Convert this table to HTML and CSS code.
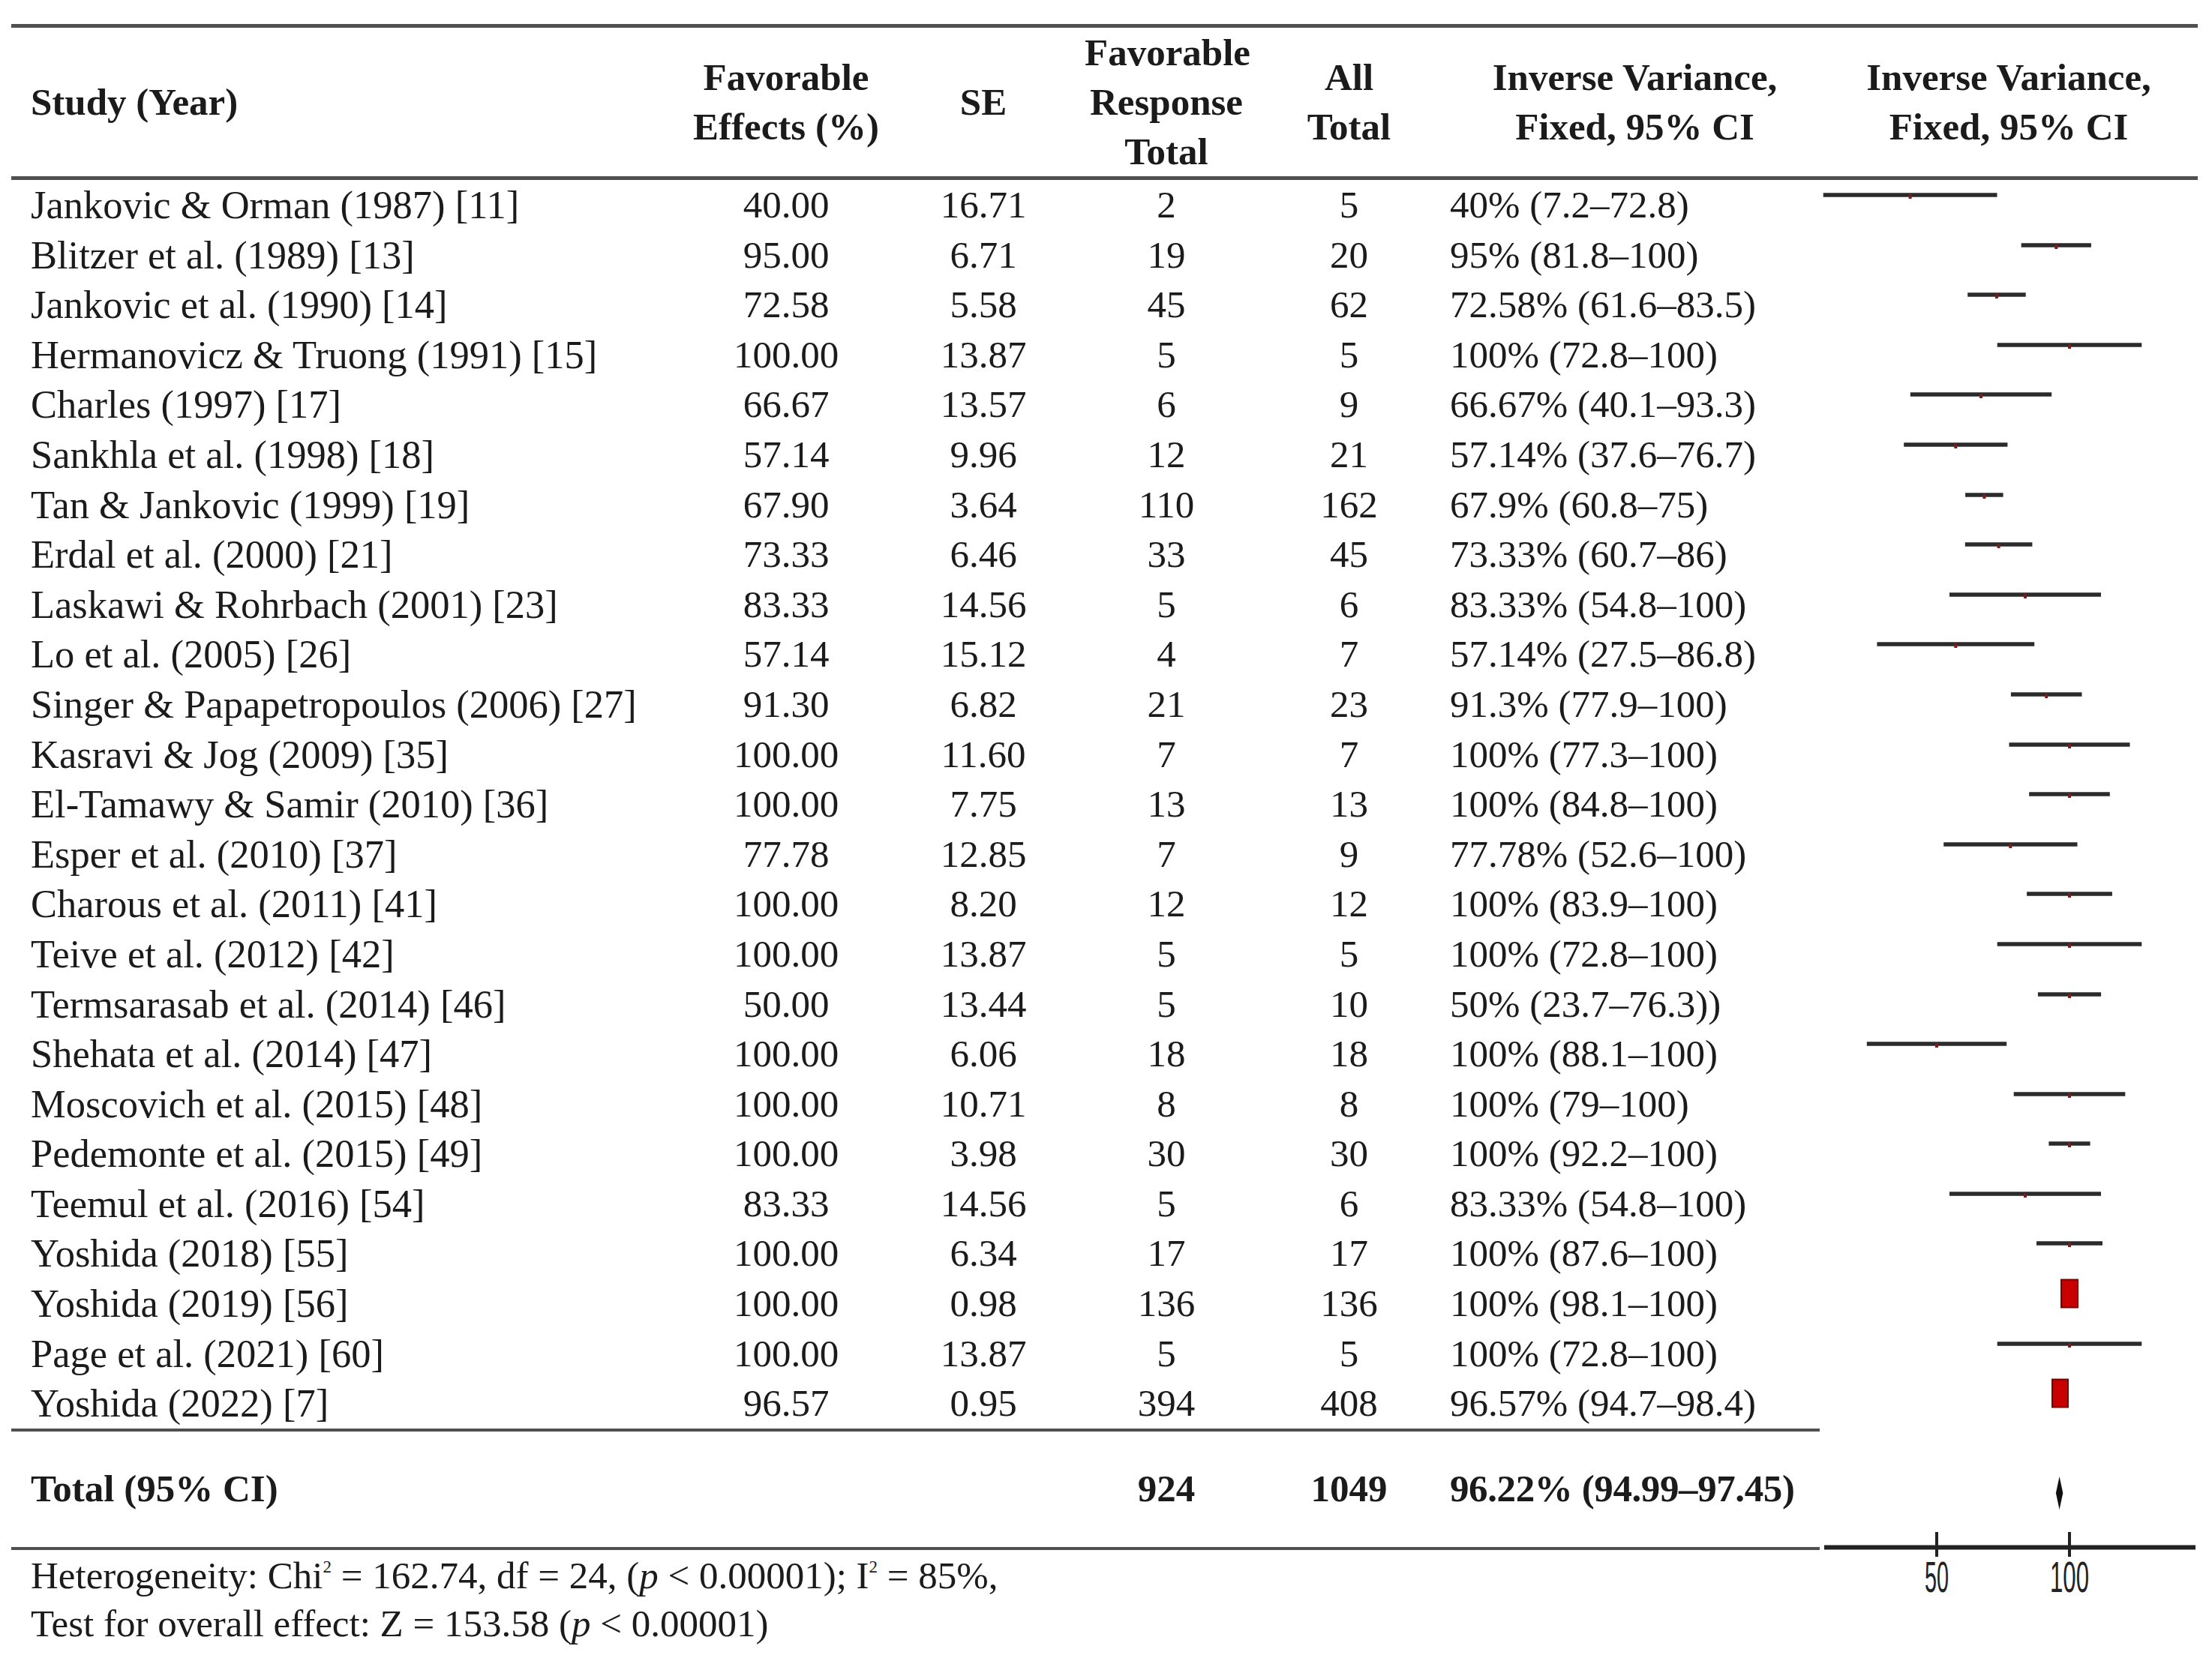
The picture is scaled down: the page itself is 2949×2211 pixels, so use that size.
FILE: index.html
```html
<!DOCTYPE html>
<html lang="en">
<head>
<meta charset="utf-8">
<title>Forest plot table</title>
<link rel="stylesheet" href="styles.css">
</head>
<body>
<div class="page">
  <div class="row head">
    <div class="c study">Study (Year)</div>
    <div class="c">Favorable<br>Effects (%)</div>
    <div class="c">SE</div>
    <div class="c">Favorable<br>Response<br>Total</div>
    <div class="c">All<br>Total</div>
    <div class="c">Inverse Variance,<br>Fixed, 95% CI</div>
    <div class="c">Inverse Variance,<br>Fixed, 95% CI</div>
  </div>

  <div class="row"><div class="c study">Jankovic &amp; Orman (1987) [11]</div><div class="c">40.00</div><div class="c">16.71</div><div class="c">2</div><div class="c">5</div><div class="c cit">40% (7.2–72.8)</div><div class="c plot"><svg class="fp" viewBox="0 0 504 66.6"><line class="ci" x1="4.7" y1="20" x2="236.5" y2="20"/><rect class="pt" x="118.6" y="19" width="4" height="6"/></svg></div></div>
  <div class="row"><div class="c study">Blitzer et al. (1989) [13]</div><div class="c">95.00</div><div class="c">6.71</div><div class="c">19</div><div class="c">20</div><div class="c cit">95% (81.8–100)</div><div class="c plot"><svg class="fp" viewBox="0 0 504 66.6"><line class="ci" x1="268.7" y1="20" x2="361.9" y2="20"/><rect class="pt" x="313.3" y="19" width="4" height="6"/></svg></div></div>
  <div class="row"><div class="c study">Jankovic et al. (1990) [14]</div><div class="c">72.58</div><div class="c">5.58</div><div class="c">45</div><div class="c">62</div><div class="c cit">72.58% (61.6–83.5)</div><div class="c plot"><svg class="fp" viewBox="0 0 504 66.6"><line class="ci" x1="197.2" y1="20" x2="274.7" y2="20"/><rect class="pt" x="233.9" y="19" width="4" height="6"/></svg></div></div>
  <div class="row"><div class="c study">Hermanovicz &amp; Truong (1991) [15]</div><div class="c">100.00</div><div class="c">13.87</div><div class="c">5</div><div class="c">5</div><div class="c cit">100% (72.8–100)</div><div class="c plot"><svg class="fp" viewBox="0 0 504 66.6"><line class="ci" x1="236.7" y1="20" x2="429.3" y2="20"/><rect class="pt" x="331" y="19" width="4" height="6"/></svg></div></div>
  <div class="row"><div class="c study">Charles (1997) [17]</div><div class="c">66.67</div><div class="c">13.57</div><div class="c">6</div><div class="c">9</div><div class="c cit">66.67% (40.1–93.3)</div><div class="c plot"><svg class="fp" viewBox="0 0 504 66.6"><line class="ci" x1="120.8" y1="20" x2="309.2" y2="20"/><rect class="pt" x="213" y="19" width="4" height="6"/></svg></div></div>
  <div class="row"><div class="c study">Sankhla et al. (1998) [18]</div><div class="c">57.14</div><div class="c">9.96</div><div class="c">12</div><div class="c">21</div><div class="c cit">57.14% (37.6–76.7)</div><div class="c plot"><svg class="fp" viewBox="0 0 504 66.6"><line class="ci" x1="112.2" y1="20" x2="250.4" y2="20"/><rect class="pt" x="179.3" y="19" width="4" height="6"/></svg></div></div>
  <div class="row"><div class="c study">Tan &amp; Jankovic (1999) [19]</div><div class="c">67.90</div><div class="c">3.64</div><div class="c">110</div><div class="c">162</div><div class="c cit">67.9% (60.8–75)</div><div class="c plot"><svg class="fp" viewBox="0 0 504 66.6"><line class="ci" x1="194.1" y1="20" x2="244.6" y2="20"/><rect class="pt" x="217.4" y="19" width="4" height="6"/></svg></div></div>
  <div class="row"><div class="c study">Erdal et al. (2000) [21]</div><div class="c">73.33</div><div class="c">6.46</div><div class="c">33</div><div class="c">45</div><div class="c cit">73.33% (60.7–86)</div><div class="c plot"><svg class="fp" viewBox="0 0 504 66.6"><line class="ci" x1="193.8" y1="20" x2="283.4" y2="20"/><rect class="pt" x="236.6" y="19" width="4" height="6"/></svg></div></div>
  <div class="row"><div class="c study">Laskawi &amp; Rohrbach (2001) [23]</div><div class="c">83.33</div><div class="c">14.56</div><div class="c">5</div><div class="c">6</div><div class="c cit">83.33% (54.8–100)</div><div class="c plot"><svg class="fp" viewBox="0 0 504 66.6"><line class="ci" x1="173" y1="20" x2="375" y2="20"/><rect class="pt" x="272" y="19" width="4" height="6"/></svg></div></div>
  <div class="row"><div class="c study">Lo et al. (2005) [26]</div><div class="c">57.14</div><div class="c">15.12</div><div class="c">4</div><div class="c">7</div><div class="c cit">57.14% (27.5–86.8)</div><div class="c plot"><svg class="fp" viewBox="0 0 504 66.6"><line class="ci" x1="76.4" y1="20" x2="286.2" y2="20"/><rect class="pt" x="179.3" y="19" width="4" height="6"/></svg></div></div>
  <div class="row"><div class="c study">Singer &amp; Papapetropoulos (2006) [27]</div><div class="c">91.30</div><div class="c">6.82</div><div class="c">21</div><div class="c">23</div><div class="c cit">91.3% (77.9–100)</div><div class="c plot"><svg class="fp" viewBox="0 0 504 66.6"><line class="ci" x1="254.9" y1="20" x2="349.5" y2="20"/><rect class="pt" x="300.2" y="19" width="4" height="6"/></svg></div></div>
  <div class="row"><div class="c study">Kasravi &amp; Jog (2009) [35]</div><div class="c">100.00</div><div class="c">11.60</div><div class="c">7</div><div class="c">7</div><div class="c cit">100% (77.3–100)</div><div class="c plot"><svg class="fp" viewBox="0 0 504 66.6"><line class="ci" x1="252.5" y1="20" x2="413.5" y2="20"/><rect class="pt" x="331" y="19" width="4" height="6"/></svg></div></div>
  <div class="row"><div class="c study">El-Tamawy &amp; Samir (2010) [36]</div><div class="c">100.00</div><div class="c">7.75</div><div class="c">13</div><div class="c">13</div><div class="c cit">100% (84.8–100)</div><div class="c plot"><svg class="fp" viewBox="0 0 504 66.6"><line class="ci" x1="279.2" y1="20" x2="386.8" y2="20"/><rect class="pt" x="331" y="19" width="4" height="6"/></svg></div></div>
  <div class="row"><div class="c study">Esper et al. (2010) [37]</div><div class="c">77.78</div><div class="c">12.85</div><div class="c">7</div><div class="c">9</div><div class="c cit">77.78% (52.6–100)</div><div class="c plot"><svg class="fp" viewBox="0 0 504 66.6"><line class="ci" x1="165.2" y1="20" x2="343.5" y2="20"/><rect class="pt" x="252.3" y="19" width="4" height="6"/></svg></div></div>
  <div class="row"><div class="c study">Charous et al. (2011) [41]</div><div class="c">100.00</div><div class="c">8.20</div><div class="c">12</div><div class="c">12</div><div class="c cit">100% (83.9–100)</div><div class="c plot"><svg class="fp" viewBox="0 0 504 66.6"><line class="ci" x1="276.1" y1="20" x2="389.9" y2="20"/><rect class="pt" x="331" y="19" width="4" height="6"/></svg></div></div>
  <div class="row"><div class="c study">Teive et al. (2012) [42]</div><div class="c">100.00</div><div class="c">13.87</div><div class="c">5</div><div class="c">5</div><div class="c cit">100% (72.8–100)</div><div class="c plot"><svg class="fp" viewBox="0 0 504 66.6"><line class="ci" x1="236.7" y1="20" x2="429.3" y2="20"/><rect class="pt" x="331" y="19" width="4" height="6"/></svg></div></div>
  <div class="row"><div class="c study">Termsarasab et al. (2014) [46]</div><div class="c">50.00</div><div class="c">13.44</div><div class="c">5</div><div class="c">10</div><div class="c cit">50% (23.7–76.3))</div><div class="c plot"><svg class="fp" viewBox="0 0 504 66.6"><line class="ci" x1="290.9" y1="20" x2="375.1" y2="20"/><rect class="pt" x="331" y="19" width="4" height="6"/></svg></div></div>
  <div class="row"><div class="c study">Shehata et al. (2014) [47]</div><div class="c">100.00</div><div class="c">6.06</div><div class="c">18</div><div class="c">18</div><div class="c cit">100% (88.1–100)</div><div class="c plot"><svg class="fp" viewBox="0 0 504 66.6"><line class="ci" x1="62.8" y1="20" x2="249.2" y2="20"/><rect class="pt" x="154" y="19" width="4" height="6"/></svg></div></div>
  <div class="row"><div class="c study">Moscovich et al. (2015) [48]</div><div class="c">100.00</div><div class="c">10.71</div><div class="c">8</div><div class="c">8</div><div class="c cit">100% (79–100)</div><div class="c plot"><svg class="fp" viewBox="0 0 504 66.6"><line class="ci" x1="258.7" y1="20" x2="407.3" y2="20"/><rect class="pt" x="331" y="19" width="4" height="6"/></svg></div></div>
  <div class="row"><div class="c study">Pedemonte et al. (2015) [49]</div><div class="c">100.00</div><div class="c">3.98</div><div class="c">30</div><div class="c">30</div><div class="c cit">100% (92.2–100)</div><div class="c plot"><svg class="fp" viewBox="0 0 504 66.6"><line class="ci" x1="305.4" y1="20" x2="360.6" y2="20"/><rect class="pt" x="331" y="19" width="4" height="6"/></svg></div></div>
  <div class="row"><div class="c study">Teemul et al. (2016) [54]</div><div class="c">83.33</div><div class="c">14.56</div><div class="c">5</div><div class="c">6</div><div class="c cit">83.33% (54.8–100)</div><div class="c plot"><svg class="fp" viewBox="0 0 504 66.6"><line class="ci" x1="173" y1="20" x2="375" y2="20"/><rect class="pt" x="272" y="19" width="4" height="6"/></svg></div></div>
  <div class="row"><div class="c study">Yoshida (2018) [55]</div><div class="c">100.00</div><div class="c">6.34</div><div class="c">17</div><div class="c">17</div><div class="c cit">100% (87.6–100)</div><div class="c plot"><svg class="fp" viewBox="0 0 504 66.6"><line class="ci" x1="289" y1="20" x2="377" y2="20"/><rect class="pt" x="331" y="19" width="4" height="6"/></svg></div></div>
  <div class="row"><div class="c study">Yoshida (2019) [56]</div><div class="c">100.00</div><div class="c">0.98</div><div class="c">136</div><div class="c">136</div><div class="c cit">100% (98.1–100)</div><div class="c plot"><svg class="fp" viewBox="0 0 504 66.6"><line class="ci" x1="326" y1="20" x2="340" y2="20"/><rect class="sq" x="322" y="1.5" width="22" height="37"/></svg></div></div>
  <div class="row"><div class="c study">Page et al. (2021) [60]</div><div class="c">100.00</div><div class="c">13.87</div><div class="c">5</div><div class="c">5</div><div class="c cit">100% (72.8–100)</div><div class="c plot"><svg class="fp" viewBox="0 0 504 66.6"><line class="ci" x1="236.7" y1="20" x2="429.3" y2="20"/><rect class="pt" x="331" y="19" width="4" height="6"/></svg></div></div>
  <div class="row"><div class="c study">Yoshida (2022) [7]</div><div class="c">96.57</div><div class="c">0.95</div><div class="c">394</div><div class="c">408</div><div class="c cit">96.57% (94.7–98.4)</div><div class="c plot"><svg class="fp" viewBox="0 0 504 66.6"><line class="ci" x1="314" y1="20" x2="327" y2="20"/><rect class="sq" x="310" y="1.5" width="21" height="37"/></svg></div></div>

  <div class="row total">
    <div class="c study">Total (95% CI)</div>
    <div class="c"></div>
    <div class="c"></div>
    <div class="c">924</div>
    <div class="c">1049</div>
    <div class="c cit">96.22% (94.99–97.45)</div>
    <div class="c plot"><svg class="fp-total" viewBox="0 0 504 162"><polygon class="dia" points="319.6,64 324.3,86 319.6,108 314.9,86"/><line class="axis" x1="6" y1="158.5" x2="501" y2="158.5"/><line class="tick" x1="156" y1="138" x2="156" y2="162"/><line class="tick" x1="333" y1="138" x2="333" y2="162"/></svg></div>
  </div>

  <div class="foot">
    <div class="note">
      <div>Heterogeneity: Chi<sup>2</sup> = 162.74, df = 24, (<i>p</i> &lt; 0.00001); I<sup>2</sup> = 85%,</div>
      <div>Test for overall effect: Z = 153.58 (<i>p</i> &lt; 0.00001)</div>
    </div>
    <svg class="fp-axis" viewBox="0 0 504 130"><line class="tick" x1="156" y1="0" x2="156" y2="9"/><line class="tick" x1="333" y1="0" x2="333" y2="9"/><text class="lbl" x="140" y="56" textLength="32" lengthAdjust="spacingAndGlyphs">50</text><text class="lbl" x="307" y="56" textLength="52" lengthAdjust="spacingAndGlyphs">100</text></svg>
  </div>
</div>
</body>
</html>
```

FILE: styles.css
```css
html, body {
  margin: 0;
  padding: 0;
  background: #ffffff;
}

.page {
  padding: 32px 0 0 15px;
  width: 2915px;
  font-family: "Liberation Serif", "Times New Roman", serif;
  font-size: 51px;
  color: #1b1b1b;
}

.row {
  display: grid;
  grid-template-columns: 905px 256px 270px 218px 269px 493px 504px;
  height: 66.6px;
  line-height: 66.6px;
}

.c {
  text-align: center;
  white-space: nowrap;
}

.study {
  text-align: left;
  padding-left: 26px;
  font-size: 52.5px;
}

.cit {
  text-align: left;
}

.head {
  height: 208px;
  box-sizing: border-box;
  border-top: 5px solid #505050;
  border-bottom: 5px solid #505050;
  font-weight: bold;
  line-height: 66px;
  align-items: center;
}

.head .study {
  font-size: 51px;
}

.plot {
  text-align: left;
}

.fp {
  display: block;
  width: 504px;
  height: 66.6px;
}

.ci {
  stroke: #2b2b2b;
  stroke-width: 5.5;
}

.pt {
  fill: #7a1c1c;
}

.sq {
  fill: #c80000;
  stroke: #7a0000;
  stroke-width: 2;
}

.total {
  height: 162px;
  font-weight: bold;
  line-height: 1;
}

.total .c {
  display: flex;
  align-items: center;
  justify-content: center;
  box-sizing: border-box;
  border-top: 4px solid #505050;
  border-bottom: 4px solid #505050;
}

.total .study {
  font-size: 51px;
}

.total .cit {
  letter-spacing: -0.4px;
}

.total .study,
.total .cit {
  justify-content: flex-start;
}

.total .plot {
  border: none;
  display: block;
}

.fp-total {
  display: block;
  width: 504px;
  height: 162px;
}

.dia {
  fill: #111111;
}

.axis {
  stroke: #222222;
  stroke-width: 6;
}

.tick {
  stroke: #222222;
  stroke-width: 4;
}

.foot {
  display: grid;
  grid-template-columns: 2411px 504px;
}

.note {
  padding: 2px 0 0 26px;
  line-height: 64px;
}

.note sup {
  font-size: 0.45em;
  line-height: 0;
  vertical-align: 0.9em;
}

.fp-axis {
  display: block;
  width: 504px;
  height: 130px;
}

.lbl {
  font-family: "Liberation Sans", Arial, sans-serif;
  font-size: 58px;
  fill: #222222;
}
```
